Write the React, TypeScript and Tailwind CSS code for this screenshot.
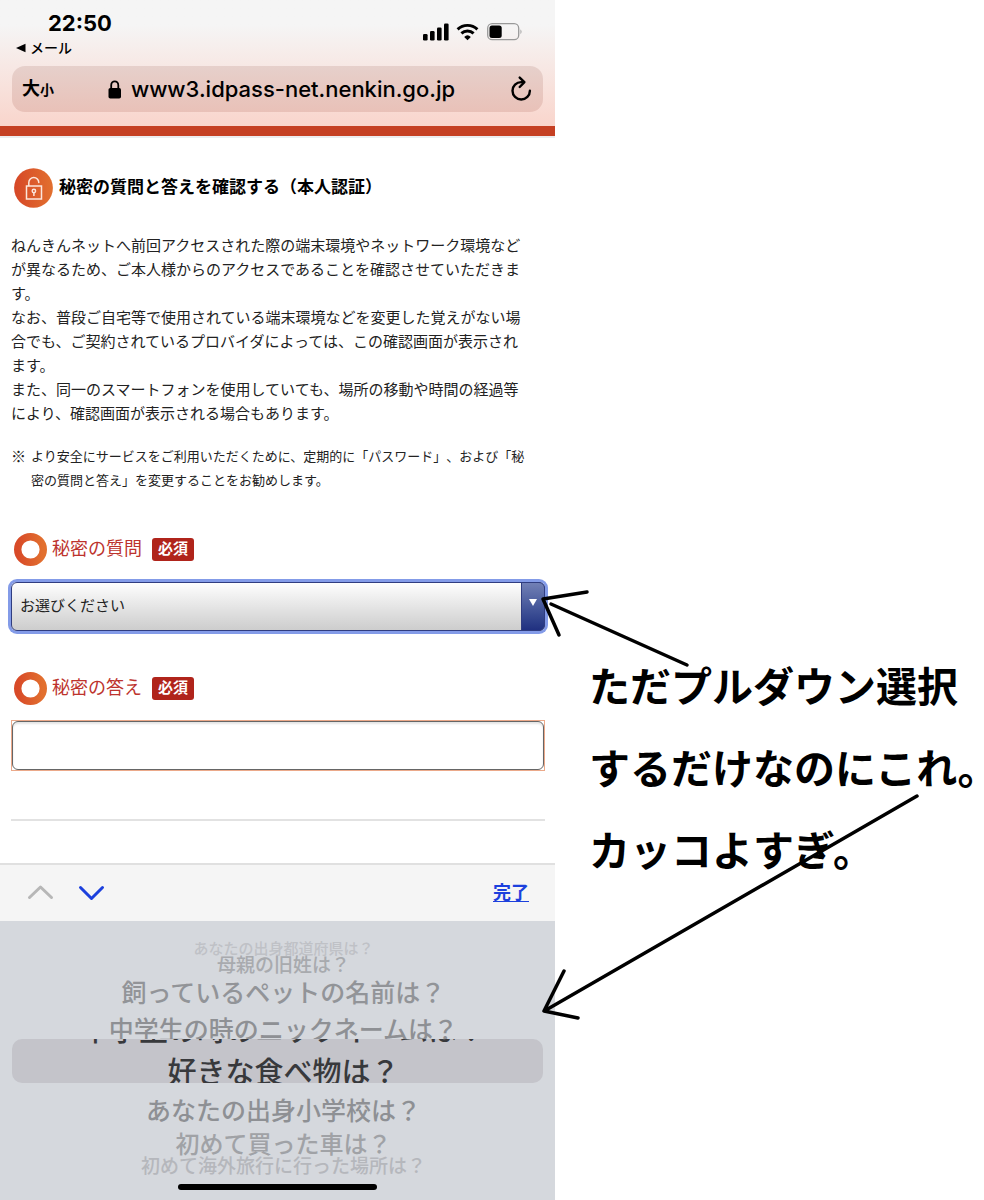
import React from "react";

const jp = "font-['Liberation_Sans','Noto_Sans_CJK_JP',sans-serif]";

function StatusIcons() {
  return (
    <svg width="100" height="20" viewBox="0 0 100 20" role="img" aria-label="status" className="shrink-0">
      <rect x="0" y="13" width="4.6" height="6.5" rx="1.3" />
      <rect x="7" y="10" width="4.6" height="9.5" rx="1.3" />
      <rect x="14" y="6.5" width="4.6" height="13" rx="1.3" />
      <rect x="21" y="2.5" width="4.6" height="17" rx="1.3" />
      <g fill="none" stroke="#000" strokeWidth="2.9">
        <path d="M34.6 8.4a14.2 14.2 0 0 1 19.8 0" />
        <path d="M38.4 12.4a8.8 8.8 0 0 1 12.2 0" />
      </g>
      <path d="M44.5 19.3l-3.3-3.4a4.8 4.8 0 0 1 6.6 0z" />
      <rect x="64.700" y="2.700" width="31" height="16" rx="4.500" fill="none" stroke="#999" strokeWidth="1.3" />
      <rect x="66.500" y="4.600" width="12.200" height="12.300" rx="2.500" />
      <path d="M97.500 8.200q2 2.400 0 5z" fill="#999" />
    </svg>
  );
}

function Header() {
  return (
    <header className="h-[138px] border-b-2 border-[#ececee] bg-white">
      <div className="flex h-[126px] flex-col bg-linear-to-b from-[#f5f5f5] from-20% to-[#f9d5cc] px-3">
        <div className="flex items-start justify-between pt-[9px]">
          <div className="flex flex-col">
            <time className="pl-9 font-['Inter','Liberation_Sans',sans-serif] text-[22px] leading-7 font-bold">22:50</time>
            <a href="#mail" className="flex items-center gap-1 pl-1 text-sm leading-[22px] font-medium">
              <svg width="10" height="10" viewBox="0 0 10 10"><path d="M0 5L9.500 .7v8.600z" /></svg>
              メール
            </a>
          </div>
          <div className="pt-3 pr-5"><StatusIcons /></div>
        </div>
        <div className="mt-[7px] flex h-[46px] items-center justify-between rounded-[13px] bg-linear-to-b from-[#e6d0cb] to-[#e9c1b8] px-[10px]">
          <button type="button" className="flex items-baseline font-bold">
            <span className="text-[18px]">大</span><span className="text-[14px]">小</span>
          </button>
          <div className="flex items-center gap-[9px]">
            <svg width="14" height="19" viewBox="0 0 14 19">
              <rect x="0.500" y="8" width="12.500" height="10.500" rx="1.800" />
              <path d="M3.200 9V5.200a3.550 3.900 0 0 1 7.100 0V9" fill="none" stroke="#000" strokeWidth="1.800" />
            </svg>
            <span className="font-['Inter','Liberation_Sans',sans-serif] text-[22px] font-medium">www3.idpass-net.nenkin.go.jp</span>
          </div>
          <button type="button" aria-label="再読み込み">
            <svg width="24" height="28" viewBox="0 0 24 28" fill="none" stroke="#000" strokeWidth="2.400" strokeLinecap="round" strokeLinejoin="round">
              <path d="M14.500 7.100H12.200A8.700 8.700 0 1 0 20.900 15.800" />
              <path d="M10.700 2.600l4.700 4.500-4.700 4.900" />
            </svg>
          </button>
        </div>
      </div>
      <div className="h-[10px] bg-[#c54023]" />
    </header>
  );
}

function LockBadge() {
  return (
    <svg width="39" height="40" viewBox="0 0 39 40" className="shrink-0">
      <defs>
        <linearGradient id="badge"><stop stopColor="#d64727" /><stop offset="1" stopColor="#e2702f" /></linearGradient>
      </defs>
      <ellipse cx="19.500" cy="20" rx="19.400" ry="19.700" fill="url(#badge)" />
      <g fill="none" stroke="#fce6dc" strokeWidth="1.500">
        <rect x="12.500" y="18" width="15" height="13" />
        <path d="M14.800 17.500v-3a5 5 0 0 1 10 0" strokeLinecap="round" />
        <circle cx="19.900" cy="23" r="1.700" />
        <path d="M19.900 24.800v3.200" />
      </g>
    </svg>
  );
}

function FieldLabel({ htmlFor, children }: { htmlFor: string; children: React.ReactNode }) {
  return (
    <label htmlFor={htmlFor} className="flex h-[34px] items-center pl-[3px]">
      <svg width="33" height="33" viewBox="0 0 33 33">
        <defs>
          <linearGradient id={`${htmlFor}-ring`}><stop stopColor="#d84a28" /><stop offset="1" stopColor="#e2702f" /></linearGradient>
        </defs>
        <circle cx="16.500" cy="16.500" r="12.800" fill="none" stroke={`url(#${htmlFor}-ring)`} strokeWidth="7.400" />
      </svg>
      <span className="ml-[5px] text-[18px] text-[#bd332d]">{children}</span>
      <span className="ml-[10px] flex h-[23px] w-[42px] items-center justify-center rounded-[3px] bg-[#b0241b] text-[15px] font-bold text-white">必須</span>
    </label>
  );
}

function Content() {
  return (
    <main className="flex flex-col pt-[30px] pr-[10px] pl-[11px]">
      <h1 className="flex items-center gap-[6px] pl-[3px] text-[17px] font-bold">
        <LockBadge />
        秘密の質問と答えを確認する（本人認証）
      </h1>
      <div className="mt-[26px] pr-5 text-[15px] leading-6 text-[#222] [text-spacing-trim:space-all]">
        <p>ねんきんネットへ前回アクセスされた際の端末環境やネットワーク環境などが異なるため、ご本人様からのアクセスであることを確認させていただきます。</p>
        <p>なお、普段ご自宅等で使用されている端末環境などを変更した覚えがない場合でも、ご契約されているプロバイダによっては、この確認画面が表示されます。</p>
        <p>また、同一のスマートフォンを使用していても、場所の移動や時間の経過等により、確認画面が表示される場合もあります。</p>
      </div>
      <div className="mt-[19px] flex gap-[5px] pr-[11px] text-[13px] leading-6 text-[#222] [text-spacing-trim:space-all]">
        <span className="text-[15px]">※</span>
        <p>より安全にサービスをご利用いただくために、定期的に「パスワード」、および「秘密の質問と答え」を変更することをお勧めします。</p>
      </div>
      <div className="mt-[39px]">
        <FieldLabel htmlFor="question">秘密の質問</FieldLabel>
      </div>
      <div className="relative mt-4 flex h-[49px] rounded-md bg-linear-to-b from-white to-[#cccccc] ring-3 ring-[#839be8]">
        <select id="question" className="h-full w-full appearance-none rounded-md border border-[#303d80] px-2 text-[15px] text-[#222] outline-none">
          <option>お選びください</option>
        </select>
        <span className="pointer-events-none absolute inset-y-0 right-0 flex w-6 justify-center rounded-r-md border border-[#303d80] bg-linear-to-b from-[#7280b5] to-[#203080] pt-4">
          <svg width="8" height="8" viewBox="0 0 8 8" fill="#fff"><path d="M0 0h8L4 7z" /></svg>
        </span>
      </div>
      <div className="mt-10">
        <FieldLabel htmlFor="answer">秘密の答え</FieldLabel>
      </div>
      <div className="mt-[15px] h-[51px] border border-[#eba98a]">
        <input id="answer" type="text" className="h-full w-full rounded-md border border-[#666] px-2 shadow-[inset_0_2px_2px_#e5e5e5] outline-none" />
      </div>
      <hr className="mt-12 border-t-2 border-[#e2e2e2]" />
    </main>
  );
}

function Picker() {
  return (
    <section aria-label="秘密の質問の選択" className="flex flex-1 flex-col">
      <div className="flex h-[58px] items-center justify-between border-t-2 border-[#e0e0e0] bg-[#f5f5f5] px-[26px]">
        <div className="flex gap-6">
          <button type="button" aria-label="前へ">
            <svg width="28" height="18" viewBox="0 0 28 18" fill="none" stroke="#b7b7b7" strokeWidth="3" strokeLinecap="round" strokeLinejoin="round"><path d="M3.500 13.500L14.500 3l11 10.500" /></svg>
          </button>
          <button type="button" aria-label="次へ">
            <svg width="28" height="18" viewBox="0 0 28 18" fill="none" stroke="#1c40dd" strokeWidth="3" strokeLinecap="round" strokeLinejoin="round"><path d="M2.500 3.500l11 11 11-11" /></svg>
          </button>
        </div>
        <button type="button" className="text-[18px] font-bold text-[#1c40dd] underline underline-offset-2">完了</button>
      </div>
      <div role="listbox" aria-label="質問" className="flex flex-1 flex-col bg-[#d5d8dd] pt-[20px] text-center font-medium whitespace-nowrap text-[#8e9094]">
        <div role="option" aria-selected="false" className="h-4 pl-3 text-[15px] leading-4 text-[#bfc1c6]">あなたの出身都道府県は？</div>
        <div role="option" aria-selected="false" className="h-[18px] pl-3 text-[19px] leading-[18px] text-[#a8aaae]">母親の旧姓は？</div>
        <div role="option" aria-selected="false" className="h-[37px] pl-3 text-[25px] leading-[37px] text-[#929498]">飼っているペットの名前は？</div>
        <div role="option" aria-selected="false" className="h-[27px] overflow-hidden pl-3 text-[25px] leading-[36px]">中学生の時のニックネームは？</div>
        <div className="mx-3 flex h-11 flex-col overflow-hidden rounded-[10px] bg-[#c4c4ca] pl-3 text-[29px] leading-[42px] text-[#38393c]">
          <div aria-hidden="true" className="-mt-[29px] h-[42px] shrink-0">中学生の時のニックネームは？</div>
          <div role="option" aria-selected="true" className="h-[42px] shrink-0">好きな食べ物は？</div>
        </div>
        <div role="option" aria-selected="false" className="mt-2 h-10 pl-3 text-[25px] leading-10">あなたの出身小学校は？</div>
        <div role="option" aria-selected="false" className="h-[27px] pl-3 text-[24px] leading-[27px] text-[#a0a2a6]">初めて買った車は？</div>
        <div role="option" aria-selected="false" className="h-[18px] pl-3 text-[19px] leading-[18px] text-[#b5b7bc]">初めて海外旅行に行った場所は？</div>
        <div className="mx-auto mt-2 h-[6px] w-[199px] rounded-full bg-black" />
      </div>
    </section>
  );
}

function Arrows() {
  return (
    <svg viewBox="0 0 984 1200" className="pointer-events-none absolute inset-x-0 top-0 w-full" fill="none" stroke="#000" strokeWidth="3.500" strokeLinecap="round" strokeLinejoin="round" aria-hidden="true">
      <path d="M687 665L551 604M587 592L543 599L559 635" />
      <path d="M917 796L546 1010M564 971L544 1011L578 1018" />
    </svg>
  );
}

export default function App() {
  return (
    <div className={`relative grid min-h-screen grid-cols-[minmax(0,555fr)_minmax(0,429fr)] bg-white text-black ${jp}`} lang="ja">
      <div className="flex flex-col">
        <Header />
        <Content />
        <div className="h-[42px]" />
        <Picker />
      </div>
      <aside className="pt-[647px] pl-[34px] text-[41px] leading-[82px] font-bold whitespace-nowrap">
        <p>ただプルダウン選択</p>
        <p>するだけなのにこれ。</p>
        <p>カッコよすぎ。</p>
      </aside>
      <Arrows />
    </div>
  );
}
